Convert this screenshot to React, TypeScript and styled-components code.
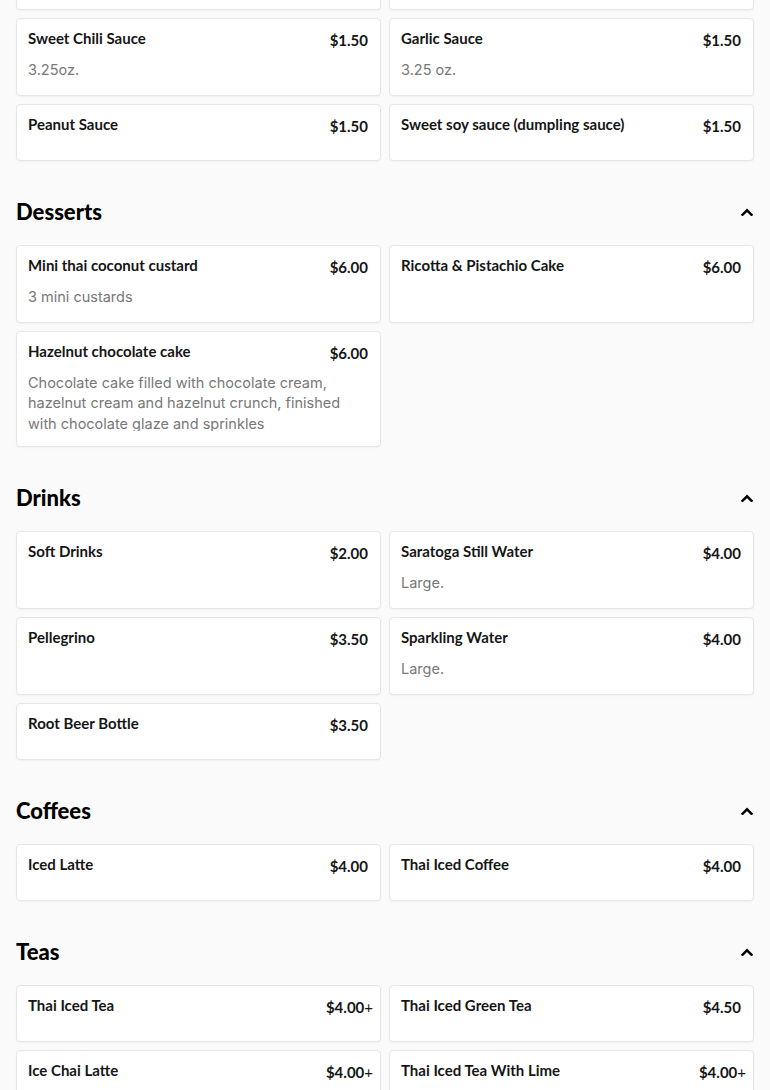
import React from "react";
import styled, { createGlobalStyle } from "styled-components";

const GlobalStyle = createGlobalStyle`
  html, body {
    margin: 0;
    padding: 0;
    background: #fafafa;
  }
  body {
    font-family: "Lato", "Inter", sans-serif;
    color: #191919;
    -webkit-font-smoothing: antialiased;
  }
  * { box-sizing: border-box; }
`;

type Item = { name: string; price: string; plus?: boolean; desc?: string };
type Section = { title: string; items: Item[] };

const sections: Section[] = [
  {
    title: "Sauces",
    items: [
      { name: "Sriracha Sauce", price: "$1.50" },
      { name: "Hoisin Sauce", price: "$1.50" },
      { name: "Sweet Chili Sauce", price: "$1.50", desc: "3.25oz." },
      { name: "Garlic Sauce", price: "$1.50", desc: "3.25 oz." },
      { name: "Peanut Sauce", price: "$1.50" },
      { name: "Sweet soy sauce (dumpling sauce)", price: "$1.50" },
    ],
  },
  {
    title: "Desserts",
    items: [
      { name: "Mini thai coconut custard", price: "$6.00", desc: "3 mini custards" },
      { name: "Ricotta & Pistachio Cake", price: "$6.00" },
      {
        name: "Hazelnut chocolate cake",
        price: "$6.00",
        desc: "Chocolate cake filled with chocolate cream, hazelnut cream and hazelnut crunch, finished with chocolate glaze and sprinkles",
      },
    ],
  },
  {
    title: "Drinks",
    items: [
      { name: "Soft Drinks", price: "$2.00" },
      { name: "Saratoga Still Water", price: "$4.00", desc: "Large." },
      { name: "Pellegrino", price: "$3.50" },
      { name: "Sparkling Water", price: "$4.00", desc: "Large." },
      { name: "Root Beer Bottle", price: "$3.50" },
    ],
  },
  {
    title: "Coffees",
    items: [
      { name: "Iced Latte", price: "$4.00" },
      { name: "Thai Iced Coffee", price: "$4.00" },
    ],
  },
  {
    title: "Teas",
    items: [
      { name: "Thai Iced Tea", price: "$4.00", plus: true },
      { name: "Thai Iced Green Tea", price: "$4.50" },
      { name: "Ice Chai Latte", price: "$4.00", plus: true },
      { name: "Thai Iced Tea With Lime", price: "$4.00", plus: true },
      { name: "Thai Iced Milk Tea", price: "$4.00", plus: true },
      { name: "Lychee Iced Tea", price: "$4.50" },
    ],
  },
];

const Page = styled.main`
  padding: 0 16px 40px;
  margin-top: -131px;
`;

const SectionBlock = styled.section`
  padding-top: 37px;
`;

const SectionHeader = styled.header`
  display: flex;
  align-items: center;
  justify-content: space-between;
  height: 28px;
  margin-bottom: 19px;
`;

const SectionTitle = styled.h2`
  margin: 0;
  font-family: "Lato", sans-serif;
  font-weight: 900;
  font-size: 22px;
  line-height: 28px;
  color: #000;
`;

const Toggle = styled.button`
  display: flex;
  align-items: center;
  justify-content: center;
  width: 24px;
  height: 24px;
  padding: 0;
  margin-right: -5px;
  border: none;
  background: none;
  color: #000;
`;

const Grid = styled.div`
  display: grid;
  grid-template-columns: 1fr 1fr;
  gap: 8px;
`;

const Card = styled.article`
  background: #fff;
  border: 1px solid #e6e6e9;
  border-radius: 4px;
  box-shadow: 0 1px 2px rgba(0, 0, 0, 0.04);
  padding: 9px 12px 15px 11px;
  display: flex;
  flex-direction: column;
`;

const CardHead = styled.div`
  display: flex;
  justify-content: space-between;
  align-items: flex-start;
  gap: 12px;
  min-height: 31px;
`;

const ItemName = styled.h3`
  margin: 0;
  font-family: "Lato", sans-serif;
  font-weight: 700;
  font-size: 15px;
  line-height: 20px;
  color: #161616;
`;

const Price = styled.span`
  font-family: "Lato", sans-serif;
  font-weight: 700;
  font-size: 15px;
  line-height: 24px;
  color: #161616;
  white-space: nowrap;
`;

const Plus = styled.span`
  font-weight: 400;
  margin-right: -5px;
`;

const Desc = styled.p`
  margin: 0;
  padding-top: 0.5px;
  font-family: "Inter", sans-serif;
  font-size: 14.5px;
  line-height: 20.5px;
  max-height: 59px;
  overflow: hidden;
  color: #787878;
`;

const Chevron = () => (
  <svg width="12" height="8" viewBox="0 0 12 8" fill="none">
    <polyline
      points="1.5,6.8 6,2.3 10.5,6.8"
      stroke="currentColor"
      strokeWidth="2.4"
      strokeLinecap="square"
      strokeLinejoin="miter"
    />
  </svg>
);

export default function App() {
  return (
    <>
      <GlobalStyle />
      <Page>
        {sections.map((s) => (
          <SectionBlock key={s.title}>
            <SectionHeader>
              <SectionTitle>{s.title}</SectionTitle>
              <Toggle aria-label={`Collapse ${s.title}`}>
                <Chevron />
              </Toggle>
            </SectionHeader>
            <Grid>
              {s.items.map((it) => (
                <Card key={it.name}>
                  <CardHead>
                    <ItemName>{it.name}</ItemName>
                    <Price>
                      {it.price}
                      {it.plus && <Plus>+</Plus>}
                    </Price>
                  </CardHead>
                  {it.desc && <Desc>{it.desc}</Desc>}
                </Card>
              ))}
            </Grid>
          </SectionBlock>
        ))}
      </Page>
    </>
  );
}
